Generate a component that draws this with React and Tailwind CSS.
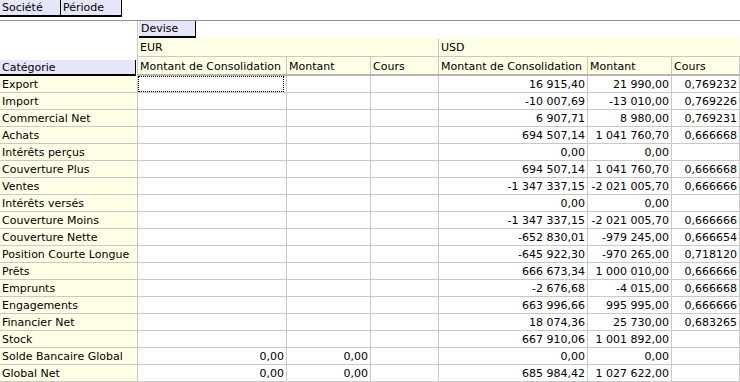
import React from "react";

const W = ["w-[149px]", "w-[84px]", "w-[68px]", "w-[149px]", "w-[84px]", "flex-1"];

const rows = [
  ["Export", "", "", "", "16 915,40", "21 990,00", "0,769232"],
  ["Import", "", "", "", "-10 007,69", "-13 010,00", "0,769226"],
  ["Commercial Net", "", "", "", "6 907,71", "8 980,00", "0,769231"],
  ["Achats", "", "", "", "694 507,14", "1 041 760,70", "0,666668"],
  ["Intérêts perçus", "", "", "", "0,00", "0,00", ""],
  ["Couverture Plus", "", "", "", "694 507,14", "1 041 760,70", "0,666668"],
  ["Ventes", "", "", "", "-1 347 337,15", "-2 021 005,70", "0,666666"],
  ["Intérêts versés", "", "", "", "0,00", "0,00", ""],
  ["Couverture Moins", "", "", "", "-1 347 337,15", "-2 021 005,70", "0,666666"],
  ["Couverture Nette", "", "", "", "-652 830,01", "-979 245,00", "0,666654"],
  ["Position Courte Longue", "", "", "", "-645 922,30", "-970 265,00", "0,718120"],
  ["Prêts", "", "", "", "666 673,34", "1 000 010,00", "0,666666"],
  ["Emprunts", "", "", "", "-2 676,68", "-4 015,00", "0,666668"],
  ["Engagements", "", "", "", "663 996,66", "995 995,00", "0,666666"],
  ["Financier Net", "", "", "", "18 074,36", "25 730,00", "0,683265"],
  ["Stock", "", "", "", "667 910,06", "1 001 892,00", ""],
  ["Solde Bancaire Global", "0,00", "0,00", "", "0,00", "0,00", ""],
  ["Global Net", "0,00", "0,00", "", "685 984,42", "1 027 622,00", ""],
];

const headers = ["Montant de Consolidation", "Montant", "Cours", "Montant de Consolidation", "Montant", "Cours"];

function Btn({ children, className = "" }) {
  return (
    <div className={`h-[17px] bg-[#e6e6fa] border-r border-b-2 border-black pl-[2px] pt-[1px] leading-[14px] whitespace-nowrap ${className}`}>
      {children}
    </div>
  );
}

export default function App() {
  return (
    <div className="w-[740px] h-[382px] overflow-hidden bg-white text-black font-['DejaVu_Sans',sans-serif] text-[11px]">
      <div className="flex h-[21px] border-b border-[#909090]">
        <Btn className="w-[61px]">Société</Btn>
        <Btn className="w-[61px]">Période</Btn>
      </div>
      <div className="flex">
        <div className="w-[138px] shrink-0 border-r border-[#c8c8c8]">
          <div className="h-[39px]" />
          <div className="h-[16px] bg-[#e6e6fa] border-r border-b-2 border-black pl-[2px] pt-[1px] leading-[13px] mr-[1px]">
            Catégorie
          </div>
          {rows.map((r, i) => (
            <div key={i} className="h-[17px] bg-[#ffffe6] border-b border-[#c8c8c8] pl-[2px] pt-[1px] leading-[15px] whitespace-nowrap overflow-hidden">
              {r[0]}
            </div>
          ))}
        </div>
        <div className="flex-1 min-w-0">
          <div className="flex h-[17px]">
            <Btn className="w-[57px] ml-[1px]">Devise</Btn>
          </div>
          <div className="flex h-[19px] bg-[#ffffe6] border-b border-[#c8c8c8] pt-[1px] leading-[17px]">
            <div className="w-[301px] shrink-0 border-r border-[#c8c8c8] pl-[2px]">EUR</div>
            <div className="flex-1 pl-[2px]">USD</div>
          </div>
          <div className="flex h-[19px] bg-[#ffffe6] border-b-2 border-[#b4b4b4] leading-[17px]">
            {headers.map((h, i) => (
              <div key={i} className={`${W[i]} shrink-0 border-r border-[#c8c8c8] pl-[2px] pt-[1px] whitespace-nowrap overflow-hidden`}>
                {h}
              </div>
            ))}
          </div>
          {rows.map((r, i) => (
            <div key={i} className="flex h-[17px] border-b border-[#c8c8c8]">
              {r.slice(1).map((v, j) => (
                <div key={j} className={`${W[j]} shrink-0 border-r border-[#c8c8c8] text-right pr-[2px] leading-[16px] whitespace-nowrap overflow-hidden`}>
                  {i === 0 && j === 0 ? (
                    <div className="h-full border border-dotted border-black" />
                  ) : (
                    <div className="pt-[1px] leading-[15px]">{v}</div>
                  )}
                </div>
              ))}
            </div>
          ))}
        </div>
      </div>
    </div>
  );
}
